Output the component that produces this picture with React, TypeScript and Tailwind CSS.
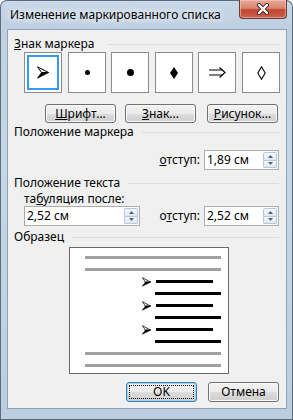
import React from "react";

function Header({ children, gap = "ml-[8px]" }: { children: React.ReactNode; gap?: string }) {
  return (
    <div className="flex items-center h-[16px] pl-[6px] pr-[7px]">
      <span className="whitespace-nowrap leading-[16px]">{children}</span>
      <div className={"flex-1 h-px bg-[#d5dfe5] " + gap} />
    </div>
  );
}

function Btn({ children, className = "" }: { children: React.ReactNode; className?: string }) {
  return (
    <div
      className={
        "h-[19px] w-[71px] rounded-[3px] border border-[#707070] bg-[linear-gradient(#f2f2f2_0%,#ebebeb_50%,#dddddd_50%,#cfcfcf_100%)] shadow-[inset_0_0_0_1px_#fbfbfb] flex items-center justify-center leading-[14px] " +
        className
      }
    >
      {children}
    </div>
  );
}

function Spin() {
  return (
    <div className="flex flex-col w-[14px] h-[16px] mr-[1px]">
      <div className="flex-1 border border-[#b9c6d6] rounded-t-[2px] bg-[linear-gradient(#f6f8fb,#dfe6ee)] flex items-center justify-center">
        <svg width="5" height="3" viewBox="0 0 5 3">
          <path d="M0 3L2.5 0L5 3Z" fill="#4d6185" />
        </svg>
      </div>
      <div className="flex-1 border border-t-0 border-[#b9c6d6] rounded-b-[2px] bg-[linear-gradient(#f6f8fb,#dfe6ee)] flex items-center justify-center">
        <svg width="5" height="3" viewBox="0 0 5 3">
          <path d="M0 0L2.5 3L5 0Z" fill="#4d6185" />
        </svg>
      </div>
    </div>
  );
}

function Input({ value, className = "" }: { value: string; className?: string }) {
  return (
    <div className={"flex items-center h-[20px] bg-white border border-[#abadb3] " + className}>
      <span className="flex-1 pl-[2px] leading-[16px] whitespace-nowrap">{value}</span>
      <Spin />
    </div>
  );
}

function Arrowhead({ w = 12, h = 13 }: { w?: number; h?: number }) {
  return (
    <svg width={w} height={h} viewBox="0 0 12 13">
      <path d="M0.5 0.8L11.5 6.5L4.5 6.5Z" fill="#fff" stroke="#000" strokeWidth="1" strokeLinejoin="round" />
      <path d="M4.5 6.5L11.5 6.5L0.5 12.2Z" fill="#000" stroke="#000" strokeWidth="0.8" strokeLinejoin="round" />
    </svg>
  );
}

function BulletBox({ children, selected = false, className = "" }: { children: React.ReactNode; selected?: boolean; className?: string }) {
  return (
    <div className={"w-[38px] h-[41px] border border-[#8b8b8b] bg-white p-[2px] " + className}>
      <div
        className={
          "w-full h-full flex items-center justify-center " +
          (selected ? "border-2 border-[#3399ff]" : "")
        }
      >
        {children}
      </div>
    </div>
  );
}

function PreviewGray() {
  return <div className="h-[3px] ml-[15px] w-[136px] bg-[#a0a0a0]" />;
}

function PreviewItem() {
  return (
    <>
      <div className="h-[3px] flex items-center pl-[72px]">
        <Arrowhead w={9} h={10} />
        <div className="h-[3px] w-[57px] bg-black ml-[5px]" />
      </div>
      <div className="h-[3px] ml-[85px] w-[66px] bg-black" />
    </>
  );
}

export default function App() {
  return (
    <div className="w-[293px] h-[420px] rounded-t-[7px] bg-[linear-gradient(180deg,#c9d8e8_0%,#bfd0e3_6%,#c7d7e9_40%,#bccde1_100%)] shadow-[inset_0_0_0_1px_#5d6c7c] text-[12px] text-black font-['Noto_Sans',sans-serif] overflow-hidden">
      {/* title bar */}
      <div className="h-[29px] flex items-start justify-between">
        <div className="pl-[10px] pt-[6px] leading-[17px] whitespace-nowrap [text-shadow:0_0_6px_#fff,0_0_10px_#fff]">
          Изменение маркированного списка
        </div>
        <div className="mr-[6px] w-[48px] h-[19px] rounded-b-[4px] border border-t-0 border-[#6b3a32] bg-[linear-gradient(#e9a998_0%,#d98572_45%,#c4442f_55%,#c86450_100%)] shadow-[inset_0_0_0_1px_rgba(255,210,200,0.5)] flex items-center justify-center">
          <svg width="14" height="12" viewBox="0 0 14 12">
            <path d="M3 2L11 10M11 2L3 10" stroke="#4a2a26" strokeWidth="4.2" strokeLinecap="round" />
            <path d="M3 2L11 10M11 2L3 10" stroke="#fff" strokeWidth="2.4" strokeLinecap="round" />
          </svg>
        </div>
      </div>

      {/* client area */}
      <div className="ml-[7px] w-[280px] h-[380px] bg-[#f0f0f0] border border-[#8fa3b8] flex flex-col">
        <div className="mt-[6px]">
          <Header gap="ml-[14px]">
            <u className="no-underline">
              <span className="underline">З</span>нак маркера
            </u>
          </Header>
        </div>

        <div className="flex pl-[16px]">
          <BulletBox selected>
            <Arrowhead />
          </BulletBox>
          <BulletBox className="ml-[6px]">
            <div className="w-[5px] h-[5px] rounded-full bg-black" />
          </BulletBox>
          <BulletBox className="ml-[5px]">
            <div className="w-[7px] h-[7px] rounded-full bg-black" />
          </BulletBox>
          <BulletBox className="ml-[6px]">
            <svg width="8" height="12" viewBox="0 0 8 12">
              <path d="M4 0L8 6L4 12L0 6Z" fill="#000" />
            </svg>
          </BulletBox>
          <BulletBox className="ml-[5px]">
            <svg width="17" height="11" viewBox="0 0 17 11">
              <path d="M0 3H13.5M0 8H13.5" stroke="#000" strokeWidth="1.2" />
              <path d="M10.5 0.5L16 5.5L10.5 10.5" stroke="#000" strokeWidth="1.2" fill="none" />
            </svg>
          </BulletBox>
          <BulletBox className="ml-[6px]">
            <svg width="9" height="14" viewBox="0 0 9 14">
              <path d="M4.5 0.8L8.2 7L4.5 13.2L0.8 7Z" fill="none" stroke="#000" strokeWidth="1.1" />
            </svg>
          </BulletBox>
        </div>

        <div className="flex mt-[11px] pl-[37px]">
          <Btn>
            <span>
              <span className="underline">Ш</span>рифт...
            </span>
          </Btn>
          <Btn className="ml-[9px]">
            <span>
              <span className="underline">З</span>нак...
            </span>
          </Btn>
          <Btn className="ml-[11px]">
            <span>
              <span className="underline">Р</span>исунок...
            </span>
          </Btn>
        </div>

        <div className="mt-[1px]">
          <Header>Положение маркера</Header>
        </div>

        <div className="flex items-center justify-end pr-[7px] mt-[10px]">
          <span className="mr-[4px] leading-[16px]">
            <span className="underline">о</span>тступ:
          </span>
          <Input value="1,89 см" className="w-[75px]" />
        </div>

        <div className="mt-[5px]">
          <Header>Положение текста</Header>
        </div>

        <div className="pl-[16px] leading-[15px] h-[15px]">
          та<span className="underline">б</span>уляция после:
        </div>

        <div className="flex items-center pl-[16px] pr-[7px]">
          <Input value="2,52 см" className="w-[116px]" />
          <div className="flex-1" />
          <span className="mr-[4px] leading-[16px]">
            о<span className="underline">т</span>ступ:
          </span>
          <Input value="2,52 см" className="w-[75px]" />
        </div>

        <div className="mt-[3px]">
          <Header>Образец</Header>
        </div>

        <div className="ml-[61px] mt-[2px] w-[160px] h-[127px] bg-white border border-[#6a6a6a] pt-[8px] flex flex-col gap-[9px]">
          <PreviewGray />
          <PreviewGray />
          <PreviewItem />
          <PreviewItem />
          <PreviewItem />
          <PreviewGray />
          <PreviewGray />
        </div>

        <div className="flex justify-end pr-[7px] mt-[8px]">
          <div className="h-[20px] w-[71px] rounded-[3px] border border-[#3c7fb1] bg-[linear-gradient(#f2f2f2_0%,#ebebeb_50%,#dddddd_50%,#cfcfcf_100%)] shadow-[inset_0_0_0_1px_#9dd5f5] p-[2px]">
            <div className="w-full h-full border border-dotted border-black flex items-center justify-center leading-[14px]">
              OK
            </div>
          </div>
          <Btn className="ml-[11px] h-[20px]">Отмена</Btn>
        </div>
      </div>
    </div>
  );
}
